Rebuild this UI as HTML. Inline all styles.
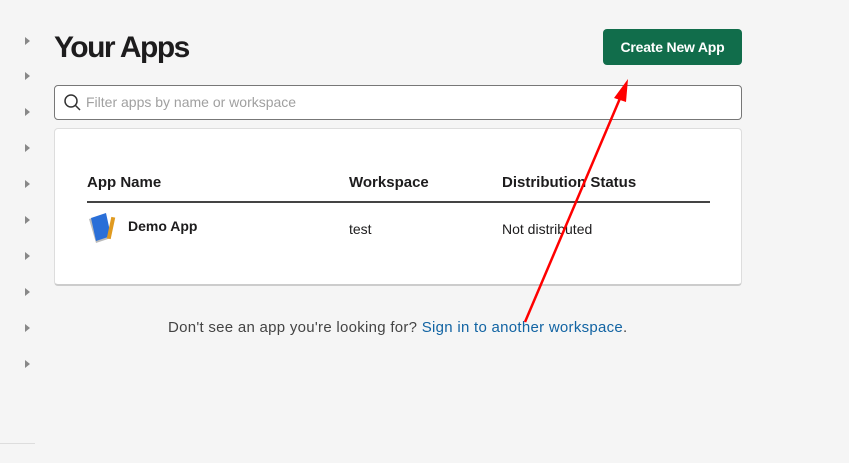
<!DOCTYPE html>
<html><head><style>
body{margin:0;width:849px;height:463px;background:#f5f5f5;font-family:"Liberation Sans",sans-serif;position:relative;overflow:hidden;color:#1d1c1d}
.tri{position:absolute;left:25px;width:0;height:0;border-left:5px solid #888;border-top:4px solid transparent;border-bottom:4px solid transparent}
h1{position:absolute;left:54px;top:31px;margin:0;font-size:30px;font-weight:bold;letter-spacing:-1.5px}
.btn{position:absolute;left:603px;top:29px;width:139px;height:36px;background:#116d4b;border-radius:4px;color:#fff;font-weight:bold;font-size:14px;text-align:center;line-height:36px;letter-spacing:-0.2px}
.search{position:absolute;left:54px;top:85px;width:686px;height:33px;border:1px solid #777;border-radius:4px;background:#fff}
.search span{position:absolute;left:31px;top:8px;font-size:14px;color:#a0a0a0}
.card{position:absolute;left:54px;top:128px;width:686px;height:155px;border:1px solid #ddd;border-bottom:2px solid #ccc;border-radius:4px;background:#fff}
.th{position:absolute;top:45px;font-size:15px;font-weight:bold}
.td{position:absolute;top:92px;font-size:14px}
.foot{position:absolute;top:319px;left:168px;font-size:15px;color:#444;letter-spacing:0.28px}
.foot a{color:#1264a3;text-decoration:none}
</style></head><body>
<div class="tri" style="top:37px"></div><div class="tri" style="top:72px"></div><div class="tri" style="top:108px"></div><div class="tri" style="top:144px"></div><div class="tri" style="top:180px"></div><div class="tri" style="top:216px"></div><div class="tri" style="top:252px"></div><div class="tri" style="top:288px"></div><div class="tri" style="top:324px"></div><div class="tri" style="top:360px"></div>
<div style="position:absolute;left:0;top:443px;width:35px;height:1px;background:#ddd"></div>
<h1>Your Apps</h1>
<div class="btn">Create New App</div>
<div class="search"><svg style="position:absolute;left:8px;top:7px" width="20" height="20" viewBox="0 0 20 20"><circle cx="8" cy="8" r="6" fill="none" stroke="#333" stroke-width="1.5"/><line x1="12.5" y1="12.5" x2="17" y2="17" stroke="#333" stroke-width="1.5"/></svg><span>Filter apps by name or workspace</span></div>
<div class="card">
<div class="th" style="left:32px">App Name</div>
<div class="th" style="left:294px">Workspace</div>
<div class="th" style="left:447px">Distribution Status</div>
<div style="position:absolute;left:32px;top:72px;width:623px;height:2px;background:#444"></div>
<svg style="position:absolute;left:33px;top:83px" width="30" height="32" viewBox="0 0 30 32"><path d="M1 7 L17 2 L23 26 L8 31 Z" fill="#bbb"/><path d="M3 6 L18 1 L23 24 L8 29 Z" fill="#2a6fd8"/><rect x="21" y="5" width="4" height="22" fill="#e09a20" transform="rotate(12 23 16)"/></svg>
<div class="td" style="left:73px;top:89px;font-weight:bold">Demo App</div>
<div class="td" style="left:294px">test</div>
<div class="td" style="left:447px">Not distributed</div>
</div>
<div class="foot">Don't see an app you're looking for? <a>Sign in to another workspace</a>.</div>
<svg style="position:absolute;left:0;top:0" width="849" height="463"><line x1="525" y1="322" x2="621" y2="96" stroke="#f00" stroke-width="2.5"/><polygon points="628,79 614,98 626,102" fill="#f00"/></svg>
</body></html>
